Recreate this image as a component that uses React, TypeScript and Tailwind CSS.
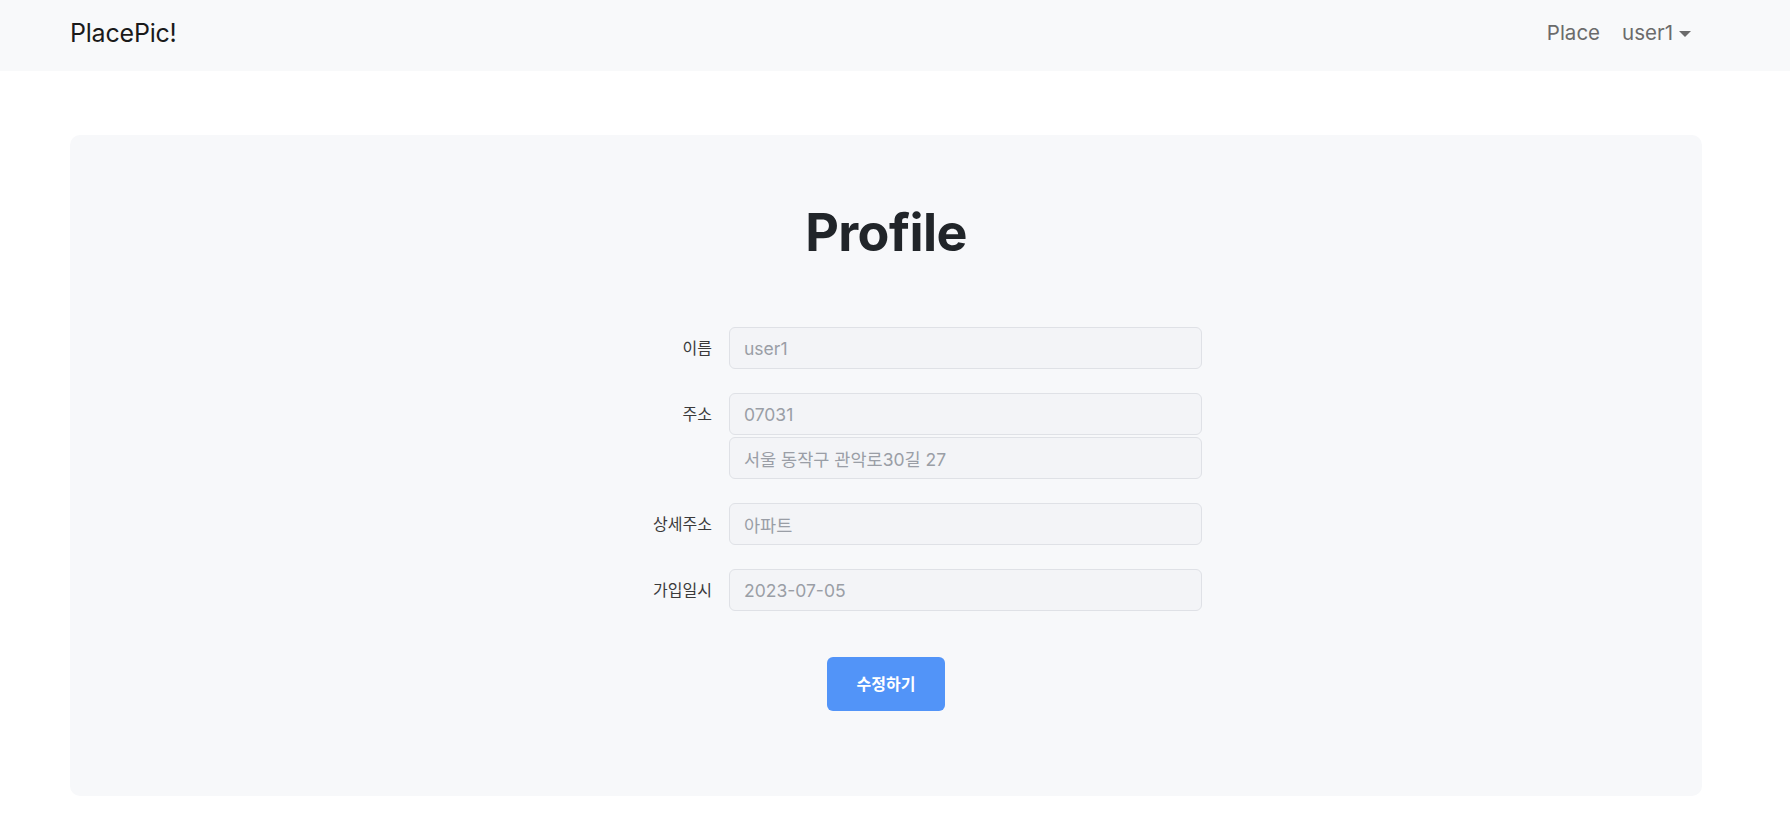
const FONT = "font-['Inter','Noto_Sans_CJK_KR',sans-serif]";

const Field = ({ label, values }: { label: string; values: string[] }) => {
  return (
    <div className="flex items-start gap-[17px]">
      <div className="w-[142px] h-[42px] flex items-center justify-end text-[16px] text-[#3a3a3a]">
        {label}
      </div>
      <div className="flex flex-col gap-[2px]">
        {values.map((v) => (
          <input
            key={v}
            disabled
            value={v}
            className="w-[473px] h-[42px] px-[14px] rounded-[6px] border border-[#dfe1e6] bg-[#f3f4f7] text-[17.5px] text-[#9a9ea6] outline-none"
          />
        ))}
      </div>
    </div>
  );
};

export default function App() {
  return (
    <div className={`${FONT} min-h-[832px] bg-white`}>
      <nav className="h-[71px] bg-[#f8f9fa] flex items-center justify-between pl-[70px] pr-[99px] pb-[4px]">
        <span className="text-[25px] text-[#1a1a1a] tracking-[-0.2px]">PlacePic!</span>
        <div className="flex items-center gap-[22px] text-[20.5px] text-[#6b6b6b]">
          <span>Place</span>
          <span className="flex items-center gap-[6px]">
            user1
            <svg width="12" height="6" viewBox="0 0 12 6">
              <path d="M0 0 L12 0 L6 6 Z" fill="#6b6b6b" />
            </svg>
          </span>
        </div>
      </nav>

      <main className="pt-[64px] pl-[70px]">
        <section className="w-[1632px] rounded-[10px] bg-[#f7f8fa] pt-[67px] pb-[85px] flex flex-col items-center">
          <h1 className="text-[52px] leading-[62px] font-bold text-[#212529] tracking-[-0.6px]">
            Profile
          </h1>
          <div className="mt-[63px] flex flex-col gap-[24px]">
            <Field label="이름" values={["user1"]} />
            <Field label="주소" values={["07031", "서울 동작구 관악로30길 27"]} />
            <Field label="상세주소" values={["아파트"]} />
            <Field label="가입일시" values={["2023-07-05"]} />
          </div>
          <button className="mt-[46px] w-[118px] h-[54px] rounded-[6px] bg-[#5294f8] text-white text-[16px] font-semibold">
            수정하기
          </button>
        </section>
      </main>
    </div>
  );
}
